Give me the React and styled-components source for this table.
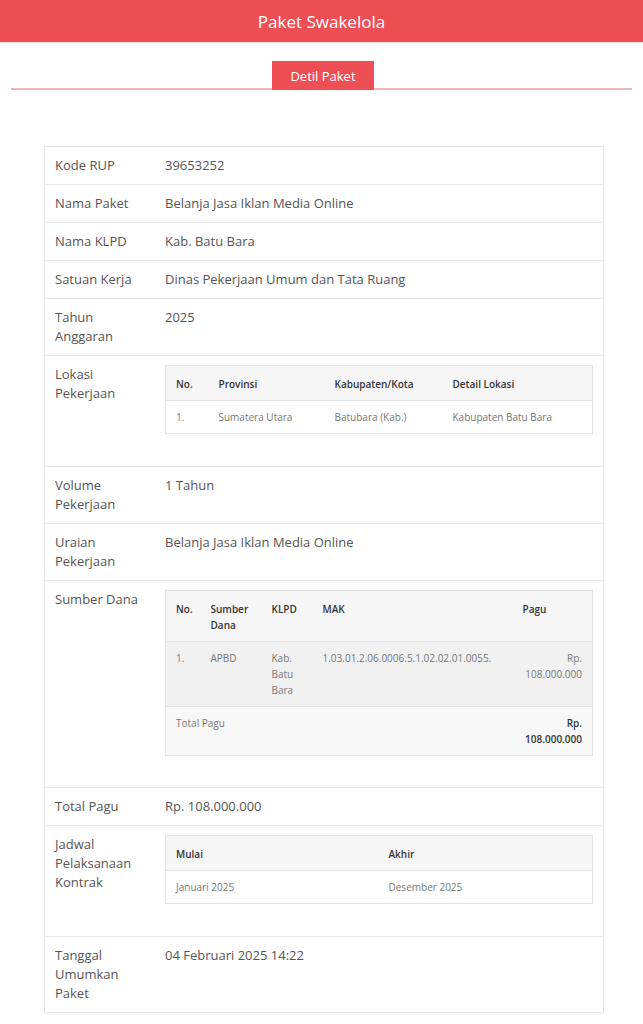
import React from 'react';
import styled, { createGlobalStyle } from 'styled-components';

const GlobalStyle = createGlobalStyle`
  body {
    margin: 0;
    background: #fff;
    font-family: 'Open Sans', 'Liberation Sans', sans-serif;
    color: #555;
  }
`;

const Header = styled.header`
  height: 42px;
  background: #ee4f55;
  color: #fff;
  display: flex;
  align-items: center;
  justify-content: center;
  font-size: 17px;
  box-shadow: 0 1px 2px rgba(0, 0, 0, 0.15);
`;

const TabBar = styled.div`
  margin: 19px 11px 0;
  border-bottom: 2px solid #e9b5b7;
  display: flex;
  justify-content: center;
`;

const Tab = styled.div`
  background: #ee4f55;
  color: #fff;
  font-size: 13px;
  width: 102px;
  height: 29px;
  display: flex;
  align-items: center;
  justify-content: center;
  margin-bottom: -2px;
  margin-left: 3px;
`;

const Content = styled.div`
  padding: 56px 39px 12px 44px;
`;

const MainTable = styled.table`
  width: 100%;
  border-collapse: collapse;
  border: 1px solid #e6e6e6;
  font-size: 13px;
  line-height: 19px;
`;

const Row = styled.tr`
  border-bottom: 1px solid #e8e8e8;
`;

const Label = styled.th`
  width: 90px;
  text-align: left;
  font-weight: 400;
  vertical-align: top;
  padding: 9px 10px;
  color: #555;
`;

const Value = styled.td`
  vertical-align: top;
  padding: 9px 10px 9px 10px;
  color: #555;
`;

const NestedTable = styled.table`
  width: 100%;
  border-collapse: collapse;
  table-layout: fixed;
  border: 1px solid #e3e3e3;
  font-size: 10px;
  line-height: 16px;
  margin-bottom: ${(p) => p.$gap || 22}px;
`;

const NTh = styled.th`
  box-sizing: border-box;
  width: ${(p) => (p.$w ? `${p.$w}px` : 'auto')};
  text-align: ${(p) => p.$align || 'left'};
  vertical-align: top;
  font-weight: 600;
  color: #333;
  background: #f6f6f6;
  padding: 10px 10px 8px;
  border-bottom: 1px solid #e3e3e3;
`;

const shades = { dark: '#f1f1f1', light: '#f8f8f8' };

const NTr = styled.tr`
  background: ${(p) => shades[p.$shade] || '#fff'};
  border-bottom: 1px solid #e3e3e3;
`;

const NTd = styled.td`
  text-align: ${(p) => p.$align || 'left'};
  vertical-align: top;
  color: ${(p) => (p.$strong ? '#333' : '#777')};
  font-weight: ${(p) => (p.$strong ? 600 : 400)};
  padding: 8px 10px;
`;

const rows = [
  ['Kode RUP', '39653252'],
  ['Nama Paket', 'Belanja Jasa Iklan Media Online'],
  ['Nama KLPD', 'Kab. Batu Bara'],
  ['Satuan Kerja', 'Dinas Pekerjaan Umum dan Tata Ruang'],
  ['Tahun Anggaran', '2025'],
];

const App = () => (
  <>
    <GlobalStyle />
    <Header>Paket Swakelola</Header>
    <TabBar>
      <Tab>Detil Paket</Tab>
    </TabBar>
    <Content>
      <MainTable>
        <tbody>
          {rows.map(([k, v]) => (
            <Row key={k}>
              <Label>{k}</Label>
              <Value>{v}</Value>
            </Row>
          ))}
          <Row>
            <Label>Lokasi Pekerjaan</Label>
            <Value>
              <NestedTable $gap={23}>
                <thead>
                  <tr>
                    <NTh $w={43}>No.</NTh>
                    <NTh $w={116}>Provinsi</NTh>
                    <NTh $w={118}>Kabupaten/Kota</NTh>
                    <NTh>Detail Lokasi</NTh>
                  </tr>
                </thead>
                <tbody>
                  <NTr>
                    <NTd>1.</NTd>
                    <NTd>Sumatera Utara</NTd>
                    <NTd>Batubara (Kab.)</NTd>
                    <NTd>Kabupaten Batu Bara</NTd>
                  </NTr>
                </tbody>
              </NestedTable>
            </Value>
          </Row>
          <Row>
            <Label>Volume Pekerjaan</Label>
            <Value>1 Tahun</Value>
          </Row>
          <Row>
            <Label>Uraian Pekerjaan</Label>
            <Value>Belanja Jasa Iklan Media Online</Value>
          </Row>
          <Row>
            <Label>Sumber Dana</Label>
            <Value>
              <NestedTable $gap={22}>
                <thead>
                  <tr>
                    <NTh $w={35}>No.</NTh>
                    <NTh $w={61}>Sumber Dana</NTh>
                    <NTh $w={51}>KLPD</NTh>
                    <NTh $w={200}>MAK</NTh>
                    <NTh>Pagu</NTh>
                  </tr>
                </thead>
                <tbody>
                  <NTr $shade="dark">
                    <NTd>1.</NTd>
                    <NTd>APBD</NTd>
                    <NTd>Kab. Batu Bara</NTd>
                    <NTd>1.03.01.2.06.0006.5.1.02.02.01.0055.</NTd>
                    <NTd $align="right">Rp. 108.000.000</NTd>
                  </NTr>
                  <NTr $shade="light">
                    <NTd colSpan={4}>Total Pagu</NTd>
                    <NTd $align="right" $strong>
                      Rp. 108.000.000
                    </NTd>
                  </NTr>
                </tbody>
              </NestedTable>
            </Value>
          </Row>
          <Row>
            <Label>Total Pagu</Label>
            <Value>Rp. 108.000.000</Value>
          </Row>
          <Row>
            <Label>Jadwal Pelaksanaan Kontrak</Label>
            <Value>
              <NestedTable $gap={23}>
                <thead>
                  <tr>
                    <NTh $w={213}>Mulai</NTh>
                    <NTh>Akhir</NTh>
                  </tr>
                </thead>
                <tbody>
                  <NTr>
                    <NTd>Januari 2025</NTd>
                    <NTd>Desember 2025</NTd>
                  </NTr>
                </tbody>
              </NestedTable>
            </Value>
          </Row>
          <Row>
            <Label>Tanggal Umumkan Paket</Label>
            <Value>04 Februari 2025 14:22</Value>
          </Row>
        </tbody>
      </MainTable>
    </Content>
  </>
);

export default App;
